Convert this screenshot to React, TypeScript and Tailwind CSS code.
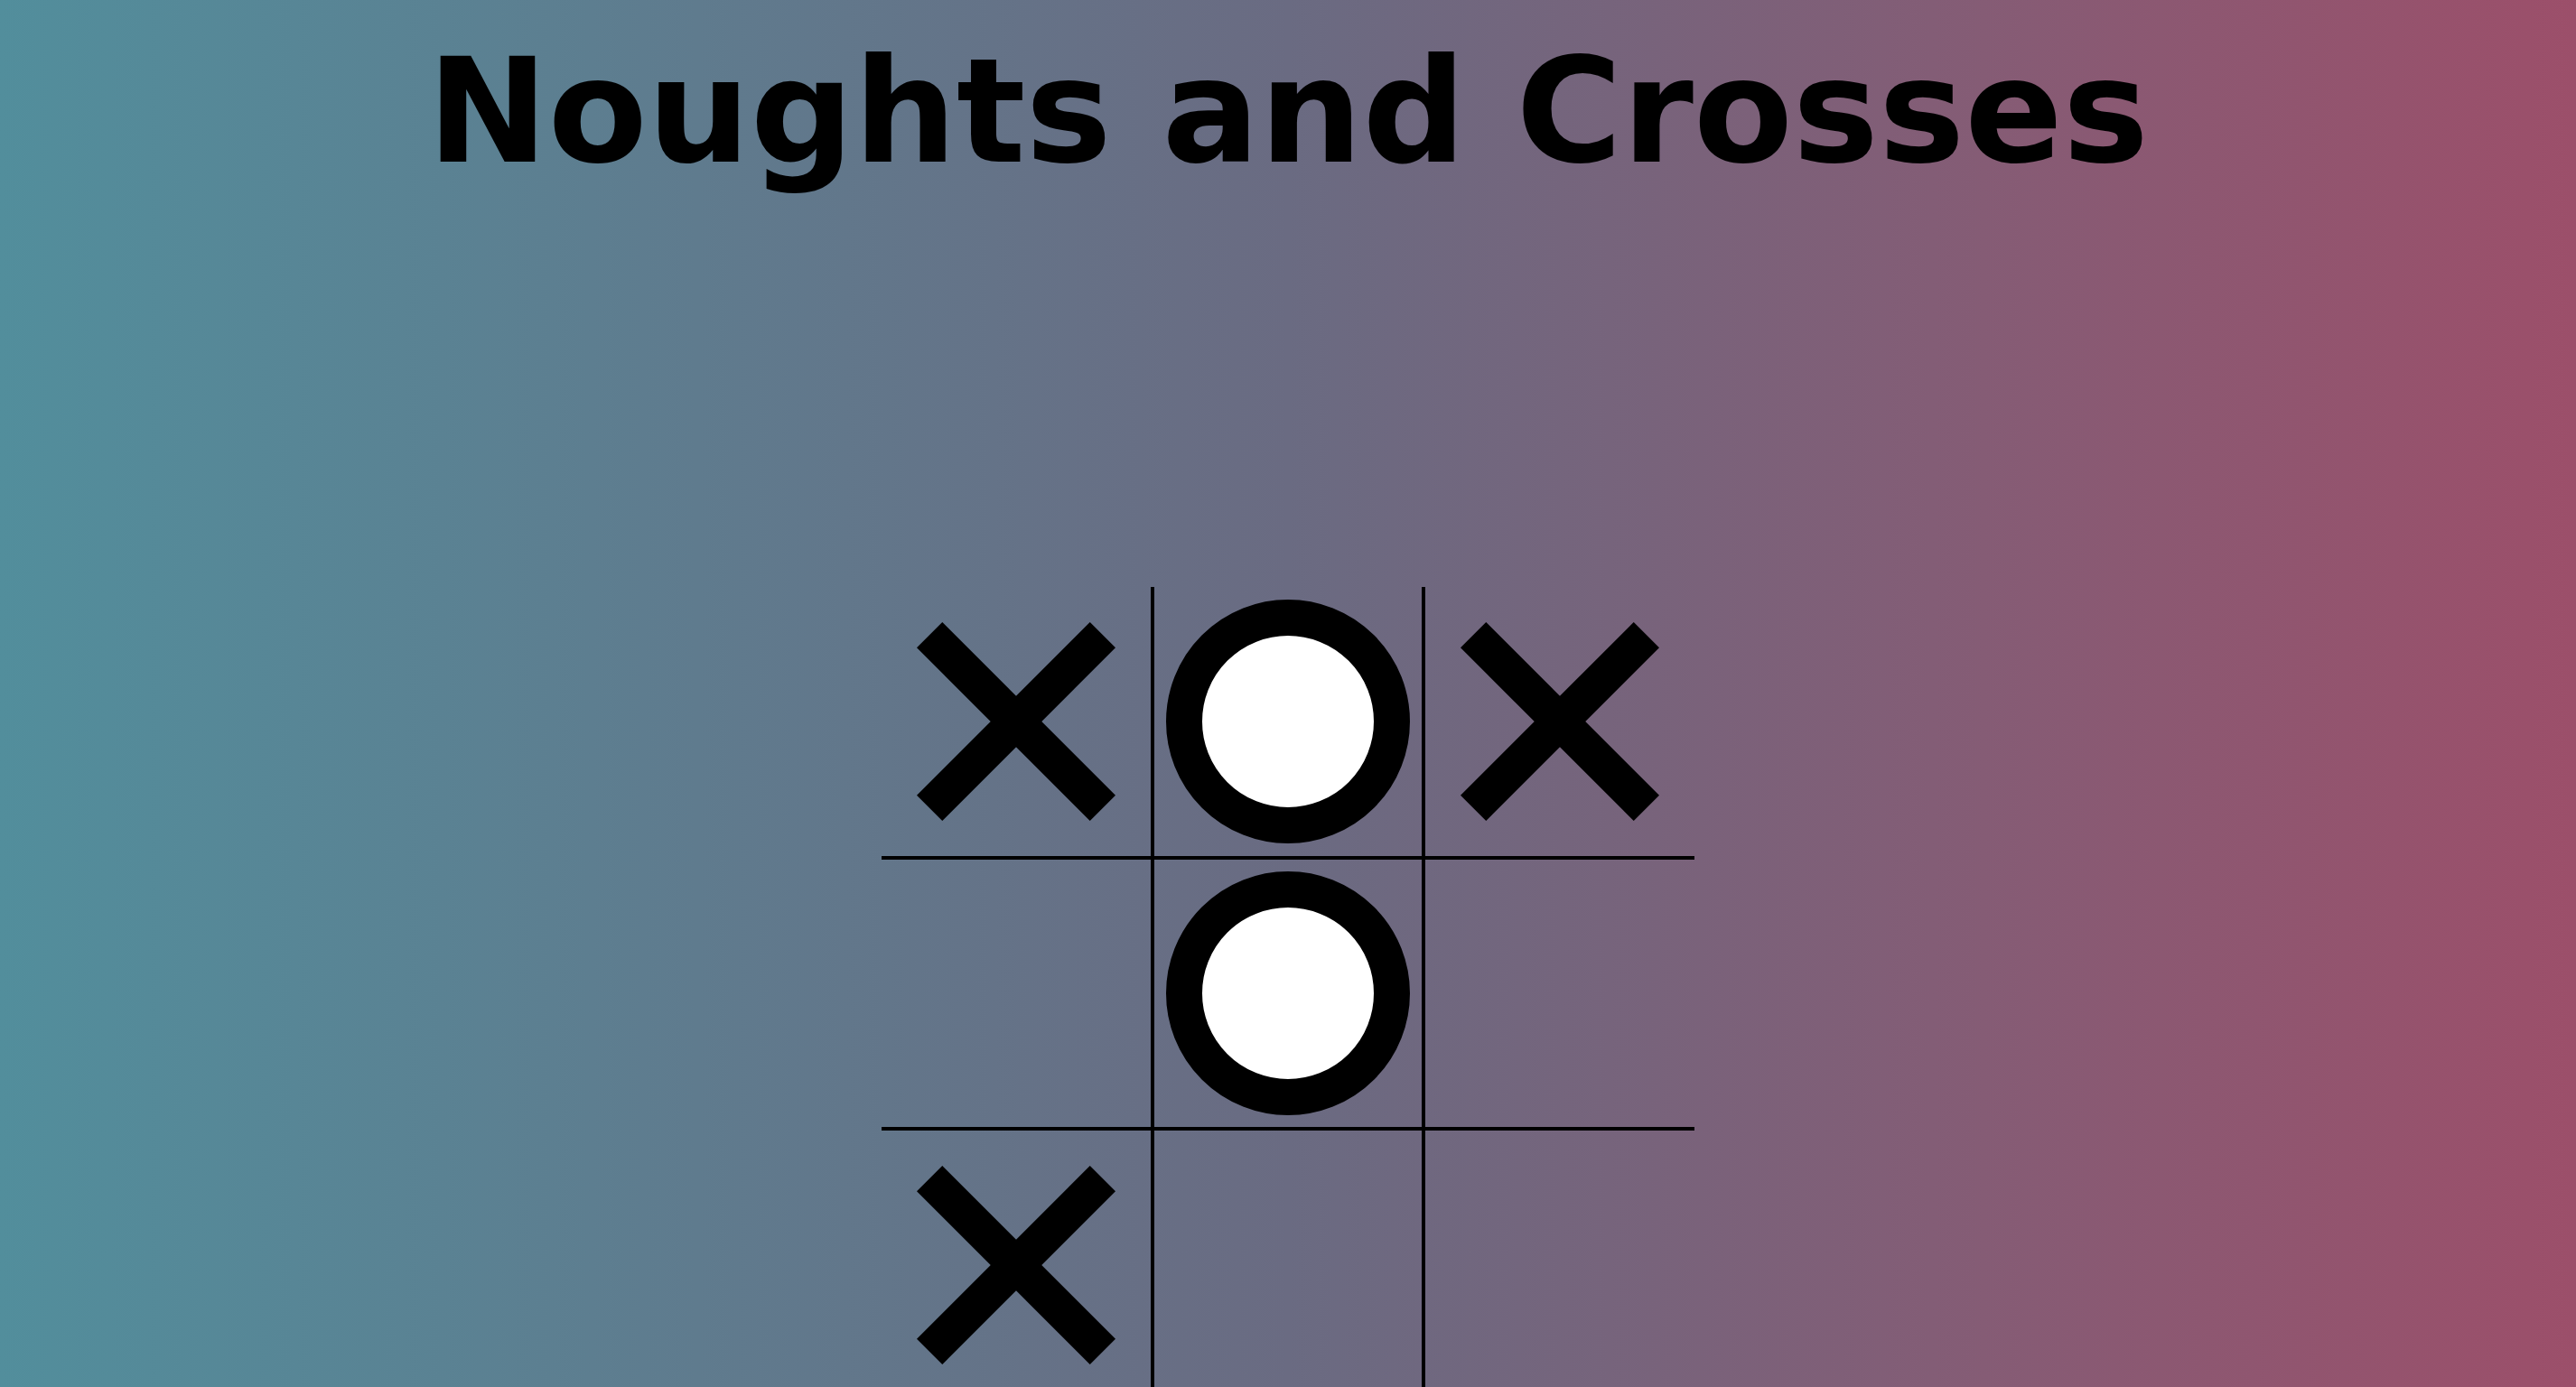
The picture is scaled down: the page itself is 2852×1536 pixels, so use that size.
import React from "react";

type Mark = "X" | "O" | "";

const board: Mark[] = ["X", "O", "X", "", "O", "", "X", "", ""];

function Cross() {
  return (
    <svg width="220" height="220" viewBox="0 0 220 220">
      <line x1="14.14" y1="14.14" x2="205.86" y2="205.86" stroke="#000" strokeWidth="40" strokeLinecap="butt" />
      <line x1="205.86" y1="14.14" x2="14.14" y2="205.86" stroke="#000" strokeWidth="40" strokeLinecap="butt" />
    </svg>
  );
}

function Nought() {
  return <div className="w-[270px] h-[270px] rounded-full border-[40px] border-black bg-white" />;
}

export default function App() {
  return (
    <div className="w-full h-[1536px] overflow-hidden bg-[linear-gradient(to_right,#528e9c,#6a6b82,#9c4f6a)]">
      <h1
        className="pt-[44px] text-center text-[160px] leading-none font-bold text-black"
        style={{ fontFamily: '"DejaVu Sans", Verdana, sans-serif' }}
      >
        Noughts and Crosses
      </h1>
      <div className="mx-auto mt-[446px] grid w-[900px] grid-cols-[repeat(3,300px)]">
        {board.map((m, i) => {
          const r = Math.floor(i / 3);
          const c = i % 3;
          return (
            <div
              key={i}
              className={[
                "flex h-[300px] w-[300px] items-center justify-center border-black",
                c < 2 ? "border-r-2" : "",
                c > 0 ? "border-l-2" : "",
                r < 2 ? "border-b-2" : "",
                r > 0 ? "border-t-2" : "",
              ].join(" ")}
            >
              {m === "X" && <Cross />}
              {m === "O" && <Nought />}
            </div>
          );
        })}
      </div>
    </div>
  );
}
